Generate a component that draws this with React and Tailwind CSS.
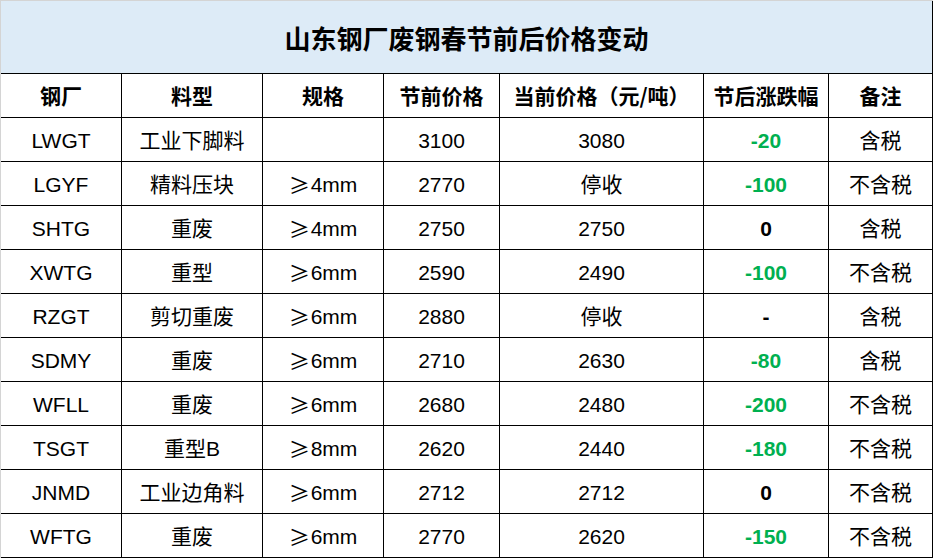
import React from "react";

const cols = ["w-[121px]", "w-[141px]", "w-[121px]", "w-[116px]", "w-[204px]", "w-[125px]", "w-[104px]"];

const headers = ["钢厂", "料型", "规格", "节前价格", "当前价格（元/吨）", "节后涨跌幅", "备注"];

const rows = [
  ["LWGT", "工业下脚料", "", "3100", "3080", "-20", "含税"],
  ["LGYF", "精料压块", "≥4mm", "2770", "停收", "-100", "不含税"],
  ["SHTG", "重废", "≥4mm", "2750", "2750", "0", "含税"],
  ["XWTG", "重型", "≥6mm", "2590", "2490", "-100", "不含税"],
  ["RZGT", "剪切重废", "≥6mm", "2880", "停收", "-", "含税"],
  ["SDMY", "重废", "≥6mm", "2710", "2630", "-80", "含税"],
  ["WFLL", "重废", "≥6mm", "2680", "2480", "-200", "不含税"],
  ["TSGT", "重型B", "≥8mm", "2620", "2440", "-180", "不含税"],
  ["JNMD", "工业边角料", "≥6mm", "2712", "2712", "0", "不含税"],
  ["WFTG", "重废", "≥6mm", "2770", "2620", "-150", "不含税"],
];

const font = "font-['Liberation_Sans','Noto_Sans_CJK_SC',sans-serif]";

function Cell({ c, ci }) {
  if (ci === 2 && c.startsWith("≥")) {
    return (
      <>
        <span className="font-['Noto_Sans_CJK_SC',sans-serif] mr-[1px]">≥</span>
        {c.slice(1)}
      </>
    );
  }
  return c;
}

export default function App() {
  return (
    <div className={`w-[933px] h-[558px] bg-white border-l border-t border-[#d4d4d4] text-black ${font}`}>
      <div className="h-[73px] bg-[#ddebf7] border-b border-r border-black flex items-center justify-center">
        <span className="text-[26px] font-bold font-['Noto_Sans_CJK_SC',sans-serif]">山东钢厂废钢春节前后价格变动</span>
      </div>
      <div className="flex h-[44px]">
        {headers.map((h, i) => (
          <div key={i} className={`${cols[i]} h-full border-r border-b border-black flex items-center justify-center text-[21px] font-bold font-['Noto_Sans_CJK_SC',sans-serif]`}>
            {h}
          </div>
        ))}
      </div>
      {rows.map((r, ri) => (
        <div key={ri} className="flex h-[44px]">
          {r.map((c, ci) => {
            let extra = "";
            if (ci === 5) {
              extra = c.startsWith("-") && c.length > 1 ? "font-bold text-[#00b050]" : "font-bold";
            }
            return (
              <div key={ci} className={`${cols[ci]} h-full border-r border-b border-black flex items-center justify-center pt-[2px] text-[21px] ${extra}`}>
                <Cell c={c} ci={ci} />
              </div>
            );
          })}
        </div>
      ))}
    </div>
  );
}
